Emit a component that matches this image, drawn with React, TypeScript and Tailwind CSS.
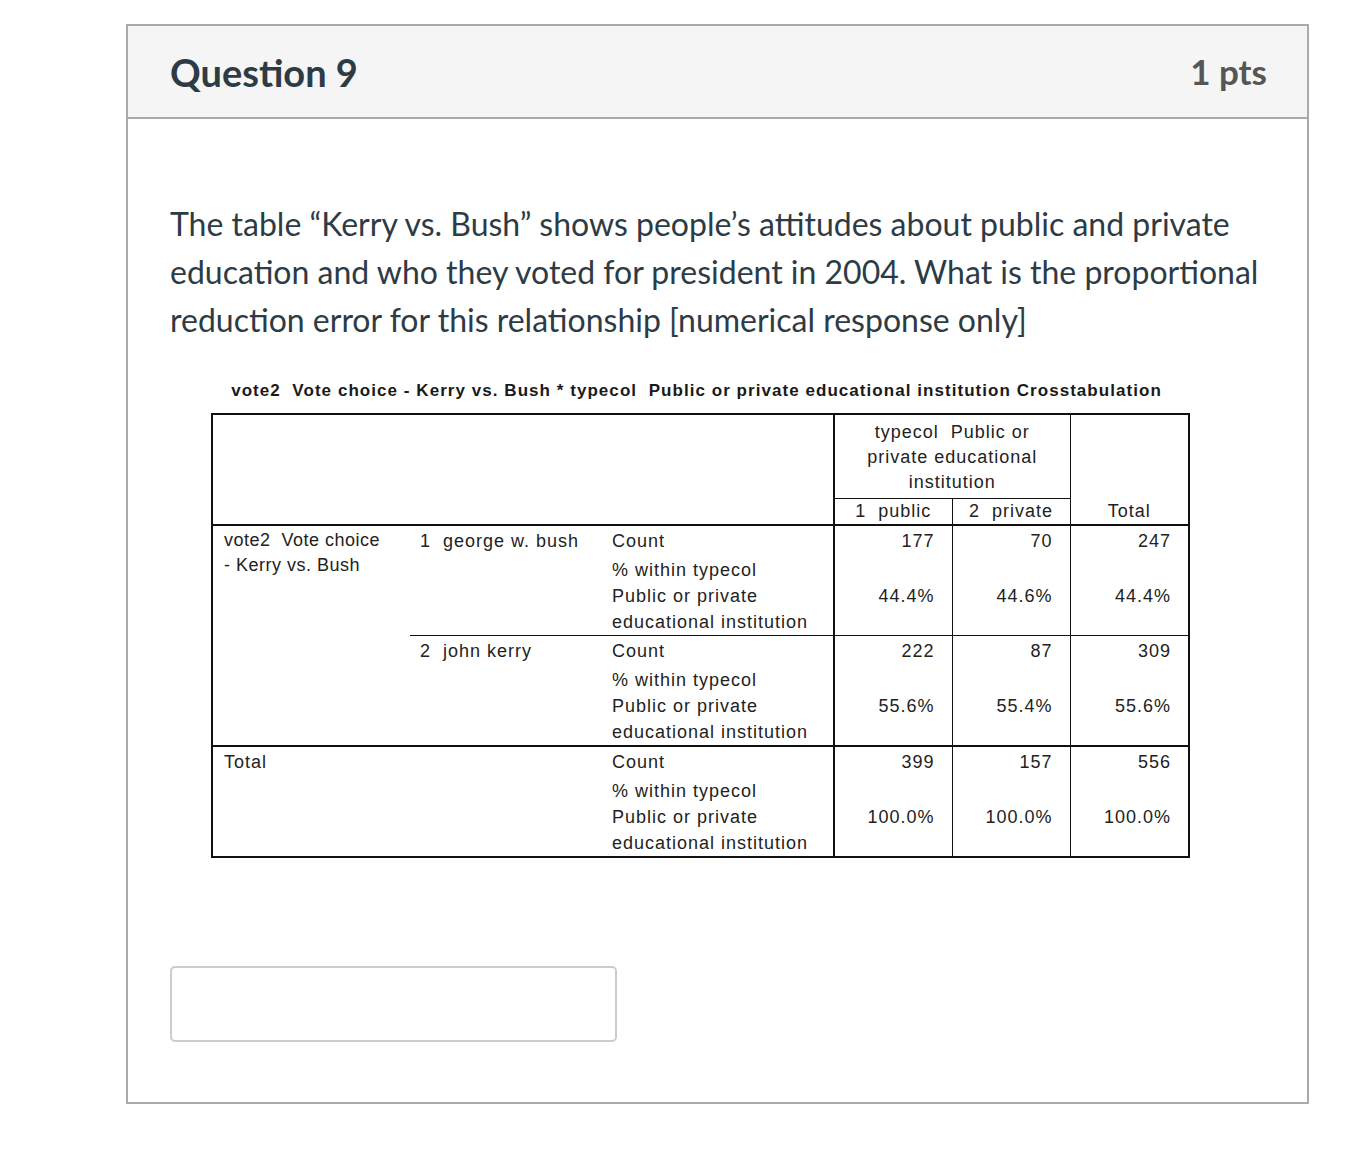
import React from "react";

const lato = { fontFamily: "Lato, 'Noto Sans', sans-serif" } as React.CSSProperties;

function Label() {
  return (
    <div className="pt-[2px]">
      <div className="h-[29px] leading-[26px]">Count</div>
      <div className="leading-[26px]">% within typecol</div>
      <div className="leading-[26px]">Public or private</div>
      <div className="leading-[26px]">educational institution</div>
    </div>
  );
}

function Num({ c, p }: { c: string; p: string }) {
  return (
    <div className="pt-[2px] text-right pr-[17px]">
      <div className="h-[29px] leading-[26px]">{c}</div>
      <div className="h-[26px]"></div>
      <div className="leading-[26px]">{p}</div>
      <div className="h-[26px]"></div>
    </div>
  );
}

export default function App() {
  return (
    <div className="min-h-[1152px] bg-white pt-[24px] pl-[126px]">
      <div className="w-[1183px] border-2 border-[#aaaaaa] bg-white" style={lato}>
        <div className="h-[93px] bg-[#f5f5f5] border-b-2 border-[#aaaaaa] flex items-center justify-between pl-[42px] pr-[40px]">
          <div className="text-[38px] font-bold text-[#2d3b45] leading-none">Question 9</div>
          <div className="text-[35px] font-bold text-[#565656] leading-none">1 pts</div>
        </div>
        <div className="pl-[42px] pr-[40px] pt-[81px] pb-[60px]">
          <p className="text-[32px] leading-[48px] text-[#2d3b45]">
            The table “Kerry vs. Bush” shows people’s attitudes about public and private
            <br />
            education and who they voted for president in 2004. What is the proportional
            <br />
            reduction error for this relationship [numerical response only]
          </p>
          <div className="mt-[36px] ml-[41px] w-[977px] text-[#1a1a1a]" style={{ fontFamily: "'Liberation Sans', Arial, sans-serif" }}>
            <div className="text-center font-bold text-[17px] tracking-[1.05px] leading-[22px] mb-[11px] pr-[6px] whitespace-nowrap">
              vote2&nbsp; Vote choice - Kerry vs. Bush * typecol&nbsp; Public or private educational institution Crosstabulation
            </div>
            <table className="border-collapse border-2 border-[#111] text-[18px] tracking-[1px] text-[#222] table-fixed w-[977px]">
              <colgroup>
                <col className="w-[198px]" />
                <col className="w-[196px]" />
                <col className="w-[228px]" />
                <col className="w-[118px]" />
                <col className="w-[118px]" />
                <col className="w-[119px]" />
              </colgroup>
              <tbody>
                <tr className="h-[84px]">
                  <td colSpan={3} rowSpan={2} className="border-b-2 border-[#111]"></td>
                  <td colSpan={2} className="border-l-2 border-b border-r border-[#111] text-center align-middle leading-[25px] px-[4px] pt-[3px]">
                    typecol&nbsp; Public or
                    <br />
                    private educational
                    <br />
                    institution
                  </td>
                  <td rowSpan={2} className="border-b-2 border-[#111] text-center align-bottom leading-[26px]">Total</td>
                </tr>
                <tr className="h-[27px]">
                  <td className="border-l-2 border-b-2 border-r border-[#111] text-center leading-[25px]">1&nbsp; public</td>
                  <td className="border-b-2 border-r border-[#111] text-center leading-[25px]">2&nbsp; private</td>
                </tr>
                <tr>
                  <td rowSpan={2} className="align-top pl-[11px] pt-[2px] leading-[25px] border-b-2 border-[#111] tracking-[0.5px]">
                    vote2&nbsp; Vote choice
                    <br />
                    - Kerry vs. Bush
                  </td>
                  <td className="align-top pl-[10px] pt-[2px] leading-[26px] border-b border-[#111] whitespace-nowrap">1&nbsp; george w. bush</td>
                  <td className="align-top pl-[6px] border-b border-[#111] whitespace-nowrap"><Label /></td>
                  <td className="align-top border-l-2 border-b border-r border-[#111]"><Num c="177" p="44.4%" /></td>
                  <td className="align-top border-b border-r border-[#111]"><Num c="70" p="44.6%" /></td>
                  <td className="align-top border-b border-[#111]"><Num c="247" p="44.4%" /></td>
                </tr>
                <tr>
                  <td className="align-top pl-[10px] pt-[2px] leading-[26px] border-b-2 border-[#111]">2&nbsp; john kerry</td>
                  <td className="align-top pl-[6px] border-b-2 border-[#111] whitespace-nowrap"><Label /></td>
                  <td className="align-top border-l-2 border-b-2 border-r border-[#111]"><Num c="222" p="55.6%" /></td>
                  <td className="align-top border-b-2 border-r border-[#111]"><Num c="87" p="55.4%" /></td>
                  <td className="align-top border-b-2 border-[#111]"><Num c="309" p="55.6%" /></td>
                </tr>
                <tr>
                  <td className="align-top pl-[11px] pt-[2px] leading-[26px]">Total</td>
                  <td></td>
                  <td className="align-top pl-[6px] whitespace-nowrap"><Label /></td>
                  <td className="align-top border-l-2 border-r border-[#111]"><Num c="399" p="100.0%" /></td>
                  <td className="align-top border-r border-[#111]"><Num c="157" p="100.0%" /></td>
                  <td className="align-top"><Num c="556" p="100.0%" /></td>
                </tr>
              </tbody>
            </table>
          </div>
          <div className="mt-[108px] w-[447px] h-[76px] border-2 border-[#cccccc] rounded-[5px] bg-white"></div>
        </div>
      </div>
    </div>
  );
}
